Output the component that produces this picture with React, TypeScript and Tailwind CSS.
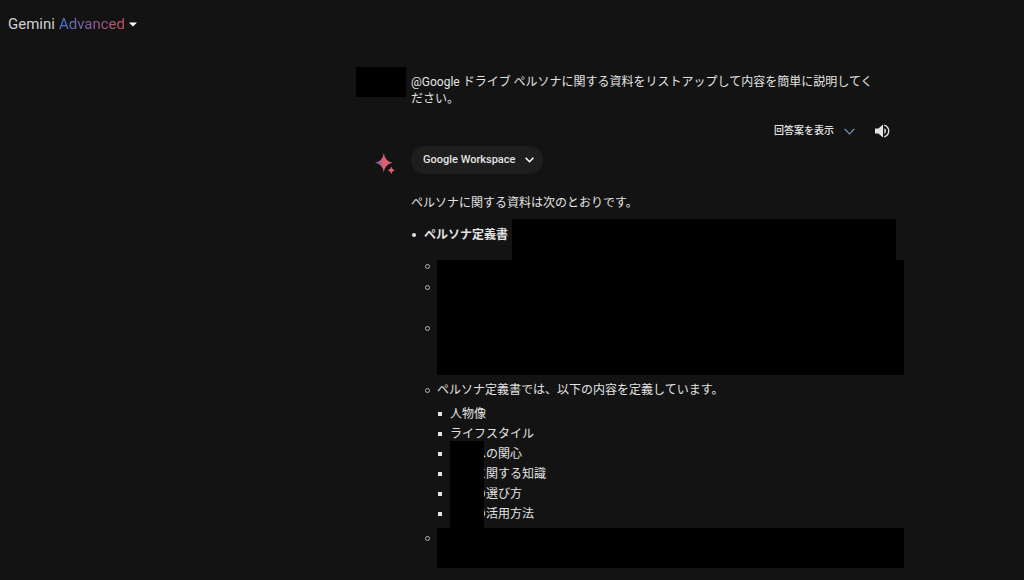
import React from "react";

const topics = [
  { text: "人物像", masked: false },
  { text: "ライフスタイル", masked: false },
  { text: "への関心", masked: true },
  { text: "に関する知識", masked: true },
  { text: "の選び方", masked: true },
  { text: "の活用方法", masked: true },
];

const Ring = () => (
  <span className="mt-2 mr-[7px] size-[5px] shrink-0 rounded-full border border-[#b4b4b4]" />
);

const Sparkle = () => (
  <svg className="ml-[19px] mt-[7px] h-[22px] w-5 shrink-0" viewBox="0 0 20 22">
    <defs>
      <linearGradient id="spark" x1="0" y1="0" x2="1" y2="0">
        <stop offset="0" stopColor="#7d62b8" />
        <stop offset="0.5" stopColor="#d9606c" />
        <stop offset="1" stopColor="#d9606c" />
      </linearGradient>
    </defs>
    <path
      d="M8.8 0Q10 8.5 17.8 9.7Q10 10.9 8.8 19.4Q7.6 10.9 -0.2 9.7Q7.6 8.5 8.8 0Z"
      fill="url(#spark)"
    />
    <path
      d="M16.3 13.6Q16.9 16.7 19.9 17.3Q16.9 17.9 16.3 21Q15.7 17.9 12.7 17.3Q15.7 16.7 16.3 13.6Z"
      fill="#d9606c"
    />
  </svg>
);

const Header = () => (
  <header className="flex h-12 items-center pl-2">
    <button className="flex items-center text-[15px] leading-5 text-[#d0d0d0]">
      <span>Gemini</span>
      <span className="ml-1 bg-linear-to-r from-[#3f79d8] via-[#8a5c9e] to-[#c9525a] bg-clip-text text-transparent">
        Advanced
      </span>
      <svg className="ml-1 h-[5px] w-2" viewBox="0 0 8 5" fill="#fff">
        <path d="M0 0.5H8L4 4.5Z" />
      </svg>
    </button>
  </header>
);

const Prompt = () => (
  <div className="flex items-start">
    <div className="mr-[5px] h-[30px] w-[50px] shrink-0 bg-black" />
    <p className="pt-[7px] leading-[17px]">
      @Google ドライブ ペルソナに関する資料をリストアップして内容を簡単に説明してく
      <br />
      ださい。
    </p>
  </div>
);

const Drafts = () => (
  <div className="mt-[13px] flex h-5 items-center justify-end pr-3.5">
    <button className="flex items-center text-[10px] leading-5 font-medium">
      回答案を表示
      <svg
        className="ml-[10px] h-[7px] w-[11px]"
        viewBox="0 0 11 7"
        fill="none"
        stroke="#8095c4"
        strokeWidth="1.2"
      >
        <path d="M0.6 0.8L5.5 5.8L10.4 0.8" />
      </svg>
    </button>
    <button className="ml-5 flex" aria-label="読み上げ">
      <svg className="h-[14px] w-[15px]" viewBox="0 0 15 14" fill="none">
        <path d="M0 4.4H3.4L8 0.4V13.6L3.4 9.6H0Z" fill="#e3e3e3" />
        <path d="M9.3 4Q11 5 11 7Q11 9 9.3 10Z" fill="#e3e3e3" />
        <path
          d="M9.2 1.2Q13.7 2.6 13.7 7Q13.7 11.4 9.2 12.8"
          stroke="#e3e3e3"
          strokeWidth="1.4"
        />
      </svg>
    </button>
  </div>
);

const Answer = () => (
  <div className="pl-[55px]">
    <p className="mt-[18px] leading-5">ペルソナに関する資料は次のとおりです。</p>
    <ul className="mt-[6px]">
      <li>
        <div className="flex h-[41px] items-start">
          <span className="mt-[14px] mr-[8px] ml-[1px] size-1 shrink-0 rounded-full bg-[#e3e3e3]" />
          <strong className="mt-[6px] leading-5 font-bold">ペルソナ定義書</strong>
          <div className="mr-2 ml-1 h-full flex-1 bg-black" />
        </div>
        <ul className="pl-[14px]">
          <li className="-mt-1 flex h-[21px]">
            <Ring />
            <div className="mt-1 flex-1 bg-black" />
          </li>
          <li className="flex h-[41px]">
            <Ring />
            <div className="flex-1 bg-black" />
          </li>
          <li className="flex h-[57px]">
            <Ring />
            <div className="flex-1 bg-black" />
          </li>
          <li className="mt-[5px] flex">
            <Ring />
            <div className="leading-5">
              <p>ペルソナ定義書では、以下の内容を定義しています。</p>
              <ul className="relative mt-1 pb-1">
                {topics.map((item) => (
                  <li key={item.text} className="flex items-center">
                    <span className="mr-[8px] ml-[1px] size-1 bg-[#e3e3e3]" />
                    <span className={item.masked ? "pl-6" : ""}>{item.text}</span>
                  </li>
                ))}
                <li
                  aria-hidden="true"
                  className="absolute bottom-0 left-[13px] h-[87px] w-[34px] bg-black"
                />
              </ul>
            </div>
          </li>
          <li className="flex h-10">
            <Ring />
            <div className="flex-1 bg-black" />
          </li>
        </ul>
      </li>
    </ul>
  </div>
);

const App = () => {
  return (
    <div className="min-h-screen bg-[#131313] font-[Roboto,'Noto_Sans_CJK_JP',sans-serif] text-[12px] text-[#e3e3e3]">
      <Header />
      <main className="pt-[19px] pr-30 pb-3 pl-[356px]">
        <Prompt />
        <Drafts />
        <div className="mt-[5px] flex items-start">
          <Sparkle />
          <button className="ml-4 flex h-7 items-center rounded-full bg-[#1e1e1e] pr-[9px] pl-3 text-[11px] font-medium">
            Google Workspace
            <svg
              className="ml-[10px] h-[6px] w-[9px]"
              viewBox="0 0 9 6"
              fill="none"
              stroke="#fff"
              strokeWidth="1.6"
            >
              <path d="M0.6 0.8L4.5 4.7L8.4 0.8" />
            </svg>
          </button>
        </div>
        <Answer />
      </main>
    </div>
  );
};

export default App;
